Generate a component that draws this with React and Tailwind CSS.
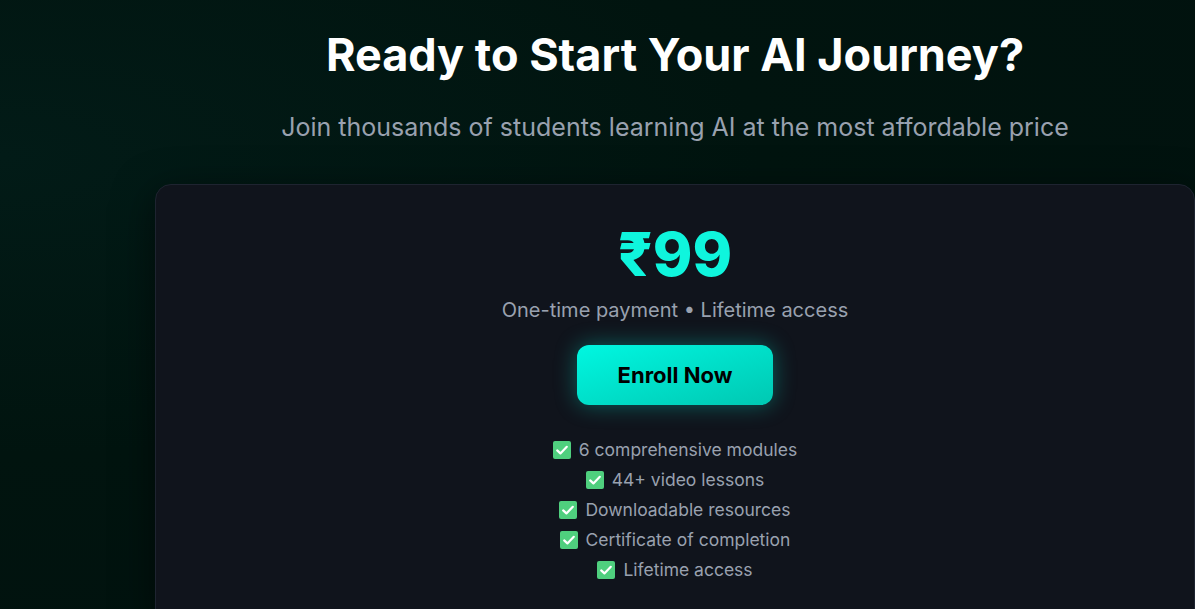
const features = [
  "6 comprehensive modules",
  "44+ video lessons",
  "Downloadable resources",
  "Certificate of completion",
  "Lifetime access",
];

function CheckBox() {
  return (
    <svg width="18" height="18" viewBox="0 0 18 18" className="shrink-0">
      <rect x="0" y="0" width="18" height="18" rx="2" fill="#4fcf7e" />
      <path d="M4.2 9.4 L7.4 12.4 L13.8 5.8" fill="none" stroke="#fff" strokeWidth="2.2" strokeLinecap="round" strokeLinejoin="round" />
    </svg>
  );
}

export default function App() {
  return (
    <div
      className="min-h-screen w-full overflow-hidden bg-[radial-gradient(ellipse_at_0%_25%,#021b17_0%,#01140f_45%,#01110e_100%)] pl-[155px]"
      style={{ fontFamily: "Inter, 'Noto Sans', sans-serif" }}
    >
      <div className="flex w-[1040px] flex-col items-center pt-[32px]">
        {/* Heading */}
        <h1 className="text-[45px] font-bold leading-none text-white">
          Ready to Start Your AI Journey?
        </h1>
        <p className="mt-[34px] text-[25px] leading-8 text-gray-400">
          Join thousands of students learning AI at the most affordable price
        </p>

        {/* Pricing card */}
        <div className="mt-[41px] flex w-full flex-col items-center rounded-2xl border border-[#1e2430] bg-[#10141c] pb-10 pt-[39px] shadow-[0_10px_40px_rgba(0,0,0,0.55)]">
          <p className="text-6xl font-extrabold leading-none text-[#0ff5dd]">₹99</p>
          <p className="mt-3 text-xl text-gray-400">One-time payment • Lifetime access</p>

          <button className="mt-[21px] flex h-[60px] items-center rounded-xl bg-gradient-to-br from-[#00f7e1] to-[#00c8b2] px-[41px] text-[22px] font-bold text-black shadow-[0_0_22px_rgba(0,240,215,0.35)]">
            Enroll Now
          </button>

          {/* Features */}
          <ul className="mt-[31px] flex flex-col items-center gap-0.5">
            {features.map((f) => (
              <li key={f} className="flex items-center gap-2 text-[17.5px] leading-7 text-gray-400">
                <CheckBox />
                <span>{f}</span>
              </li>
            ))}
          </ul>
        </div>
      </div>
    </div>
  );
}
